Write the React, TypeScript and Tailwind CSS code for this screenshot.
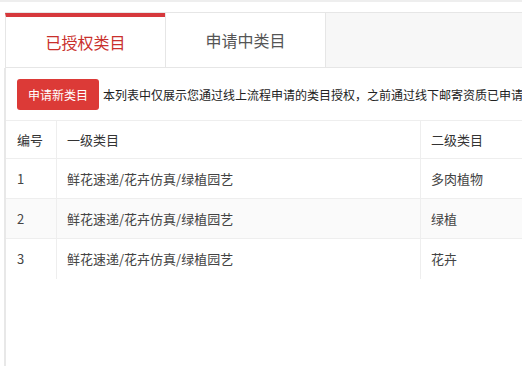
import React from 'react';

const rows = [
  { id: 1, first: '鲜花速递/花卉仿真/绿植园艺', second: '多肉植物' },
  { id: 2, first: '鲜花速递/花卉仿真/绿植园艺', second: '绿植' },
  { id: 3, first: '鲜花速递/花卉仿真/绿植园艺', second: '花卉' },
];

export default function App() {
  return (
    <div
      className="h-[366px] w-[522px] overflow-hidden bg-white text-[#333]"
      style={{ fontFamily: '"Microsoft YaHei", "Noto Sans CJK SC", "Noto Sans", sans-serif' }}
    >
      <div className="h-[2px] bg-[#eeeeee]" />
      <div className="h-[10px]" />

      {/* Tabs */}
      <div className="ml-[5px] flex h-[56px] w-[700px] border-y border-[#e6e6e6] bg-[#f7f7f7]">
        <div className="flex w-[160px] items-center justify-center border-l border-t-4 border-l-[#e6e6e6] border-t-[#d6383c] bg-white text-[16px] text-[#c9302c]">
          已授权类目
        </div>
        <div className="flex w-[161px] items-center justify-center border-x border-[#e6e6e6] bg-white text-[16px] text-[#555]">
          申请中类目
        </div>
      </div>

      {/* Content */}
      <div className="ml-[4px] h-[300px] border-l-2 border-[#e8e8e8]">
        <div className="flex items-center gap-[4px] px-[11px] pt-[11px]">
          <button className="h-[31px] w-[82px] shrink-0 rounded-[3px] bg-[#dc3a37] text-[12px] text-white">
            申请新类目
          </button>
          <span className="whitespace-nowrap text-[12px] text-[#222]">
            本列表中仅展示您通过线上流程申请的类目授权，之前通过线下邮寄资质已申请的类目请在原处查看
          </span>
        </div>

        {/* Table */}
        <div className="mt-[10px] w-[700px] text-[13px]">
          <div className="flex h-[39px] border-y border-[#eeeeee]">
            <div className="flex w-[51px] items-center border-r border-[#eeeeee] pl-[11px]">编号</div>
            <div className="flex w-[364px] items-center border-r border-[#eeeeee] pl-[10px]">一级类目</div>
            <div className="flex flex-1 items-center pl-[10px]">二级类目</div>
          </div>
          {rows.map((r) => (
            <div
              key={r.id}
              className={`flex h-[40px] ${r.id < 3 ? 'border-b border-[#eeeeee]' : ''} ${r.id === 2 ? 'bg-[#fafafa]' : ''}`}
            >
              <div className="flex w-[51px] items-center border-r border-[#eeeeee] pl-[11px] text-[#444]">{r.id}</div>
              <div className="flex w-[364px] items-center border-r border-[#eeeeee] pl-[10px] text-[#444]">{r.first}</div>
              <div className="flex flex-1 items-center pl-[10px] text-[#444]">{r.second}</div>
            </div>
          ))}
        </div>
      </div>
    </div>
  );
}
